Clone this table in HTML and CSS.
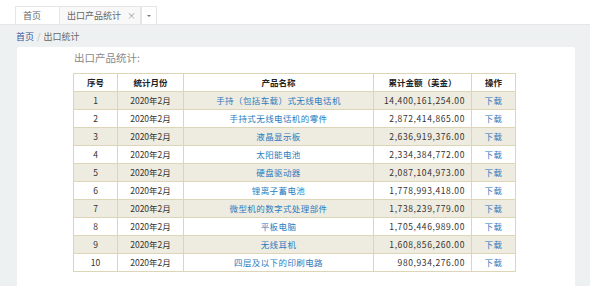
FILE: index.html
```html
<!DOCTYPE html>
<html lang="zh">
<head>
<meta charset="utf-8">
<title>出口产品统计</title>
<link rel="stylesheet" href="styles.css">
</head>
<body>
<div class="topbar">
  <div class="tabs">
    <div class="tab">首页</div>
    <div class="tab active">出口产品统计<span class="close">×</span></div>
    <div class="tab drop"><span class="caret"></span></div>
  </div>
</div>
<div class="crumb"><a class="home">首页</a><span class="sep">/</span><span class="cur">出口统计</span></div>
<div class="panel">
  <div class="title">出口产品统计:</div>
  <table class="grid">
    <colgroup><col class="c1"><col class="c2"><col class="c3"><col class="c4"><col class="c5"></colgroup>
    <thead>
      <tr><th>序号</th><th>统计月份</th><th>产品名称</th><th>累计金额（美金）</th><th>操作</th></tr>
    </thead>
    <tbody>
      <tr class="odd"><td>1</td><td>2020年2月</td><td><a>手持（包括车载）式无线电话机</a></td><td class="num">14,400,161,254.00</td><td><a>下载</a></td></tr>
      <tr><td>2</td><td>2020年2月</td><td><a>手持式无线电话机的零件</a></td><td class="num">2,872,414,865.00</td><td><a>下载</a></td></tr>
      <tr class="odd"><td>3</td><td>2020年2月</td><td><a>液晶显示板</a></td><td class="num">2,636,919,376.00</td><td><a>下载</a></td></tr>
      <tr><td>4</td><td>2020年2月</td><td><a>太阳能电池</a></td><td class="num">2,334,384,772.00</td><td><a>下载</a></td></tr>
      <tr class="odd"><td>5</td><td>2020年2月</td><td><a>硬盘驱动器</a></td><td class="num">2,087,104,973.00</td><td><a>下载</a></td></tr>
      <tr><td>6</td><td>2020年2月</td><td><a>锂离子蓄电池</a></td><td class="num">1,778,993,418.00</td><td><a>下载</a></td></tr>
      <tr class="odd"><td>7</td><td>2020年2月</td><td><a>微型机的数字式处理部件</a></td><td class="num">1,738,239,779.00</td><td><a>下载</a></td></tr>
      <tr><td>8</td><td>2020年2月</td><td><a>平板电脑</a></td><td class="num">1,705,446,989.00</td><td><a>下载</a></td></tr>
      <tr class="odd"><td>9</td><td>2020年2月</td><td><a>无线耳机</a></td><td class="num">1,608,856,260.00</td><td><a>下载</a></td></tr>
      <tr><td>10</td><td>2020年2月</td><td><a>四层及以下的印刷电路</a></td><td class="num">980,934,276.00</td><td><a>下载</a></td></tr>
    </tbody>
  </table>
</div>
</body>
</html>
```

FILE: styles.css
```css
html, body {
  margin: 0;
  padding: 0;
  background: #eef1f2;
  font-family: "Noto Sans CJK SC", "Noto Sans", sans-serif;
  height: 286px;
  overflow: hidden;
}
.topbar {
  background: #fff;
  height: 24px;
  border-bottom: 1px solid #e6e6e6;
  display: flex;
  align-items: flex-end;
}
.tabs {
  display: flex;
  align-items: flex-end;
  padding-left: 15px;
}
.tab {
  box-sizing: border-box;
  height: 18px;
  border: 1px solid #e6e6e6;
  border-bottom: none;
  background: #fff;
  color: #666;
  font-size: 9px;
  line-height: 17px;
  padding-left: 7px;
  width: 45px;
  margin-right: -1px;
}
.tab.active {
  width: 82px;
  background: #f8f8f8;
  display: flex;
  justify-content: space-between;
  padding-right: 4px;
}
.tab .close {
  color: #999;
  font-size: 9px;
}
.tab.drop {
  width: 16px;
  padding: 0;
  display: flex;
  justify-content: center;
  align-items: center;
  margin-left: 1px;
}
.caret {
  width: 0;
  height: 0;
  border-left: 2px solid transparent;
  border-right: 2px solid transparent;
  border-top: 2px solid #777;
}
.crumb {
  padding: 5px 0 0 16px;
  height: 17px;
  font-size: 9px;
  line-height: 13px;
}
.crumb .home { color: #34549a; }
.crumb .sep { color: #bbb; margin: 0 3px; }
.crumb .cur { color: #666; }
.panel {
  background: #fff;
  margin: 0 15px 0 17px;
  border-radius: 3px 3px 0 0;
  height: 239px;
  padding: 4px 0 0 56px;
  box-sizing: border-box;
}
.title {
  color: #888;
  font-size: 10.5px;
  line-height: 14px;
  height: 22px;
  padding-left: 1px;
}
.grid {
  border-collapse: collapse;
  width: 442px;
  table-layout: fixed;
  font-size: 8.5px;
  color: #333;
}
.c1 { width: 44px; }
.c2 { width: 66px; }
.c3 { width: 190px; }
.c4 { width: 98px; }
.c5 { width: 44px; }
.grid th, .grid td {
  border: 1px solid #dcd5b8;
  height: 17px;
  padding: 0;
  text-align: center;
  line-height: 17px;
  white-space: nowrap;
}
.grid th {
  font-weight: bold;
  color: #222;
  background: #fff;
}
.grid tr.odd td { background: #eeebe0; }
.grid a { color: #2a7cc0; letter-spacing: 0.4px; }
.grid td.num {
  text-align: right;
  padding-right: 6px;
  letter-spacing: 0.6px;
}
```
